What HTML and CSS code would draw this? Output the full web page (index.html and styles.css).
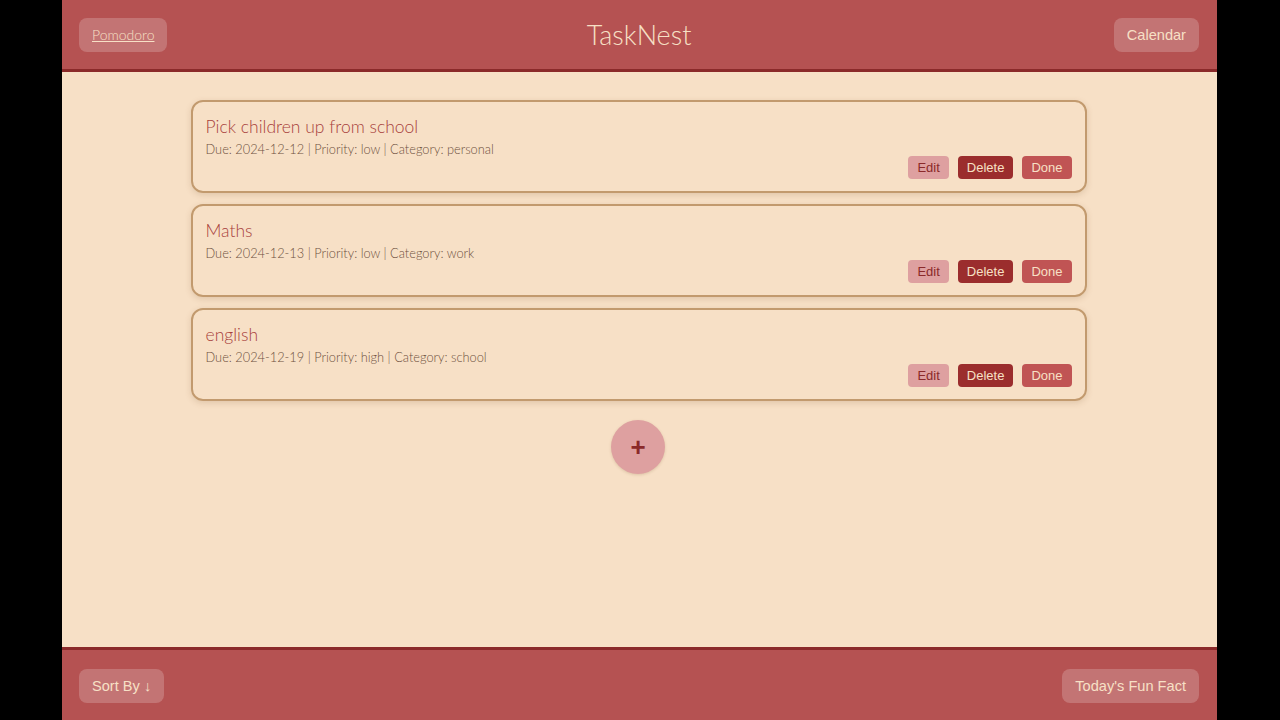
FILE: index.html
```html
<!DOCTYPE html>
<html>
<head>
<meta charset="utf-8">
<title>TaskNest</title>
<link rel="stylesheet" href="styles.css">
</head>
<body>
<div class="app">
  <header class="topbar">
    <a class="btn-ghost link" href="#">Pomodoro</a>
    <h1 class="brand">TaskNest</h1>
    <button class="btn-ghost">Calendar</button>
  </header>
  <main class="content">
    <div class="task-list">
      <div class="task">
        <h3 class="task-title">Pick children up from school</h3>
        <p class="task-meta">Due: 2024-12-12 | Priority: low | Category: personal</p>
        <div class="task-actions">
          <button class="btn-edit">Edit</button>
          <button class="btn-delete">Delete</button>
          <button class="btn-done">Done</button>
        </div>
      </div>
      <div class="task">
        <h3 class="task-title">Maths</h3>
        <p class="task-meta">Due: 2024-12-13 | Priority: low | Category: work</p>
        <div class="task-actions">
          <button class="btn-edit">Edit</button>
          <button class="btn-delete">Delete</button>
          <button class="btn-done">Done</button>
        </div>
      </div>
      <div class="task">
        <h3 class="task-title">english</h3>
        <p class="task-meta">Due: 2024-12-19 | Priority: high | Category: school</p>
        <div class="task-actions">
          <button class="btn-edit">Edit</button>
          <button class="btn-delete">Delete</button>
          <button class="btn-done">Done</button>
        </div>
      </div>
    </div>
    <button class="add-btn">+</button>
  </main>
  <footer class="bottombar">
    <button class="btn-ghost">Sort By ↓</button>
    <button class="btn-ghost">Today's Fun Fact</button>
  </footer>
</div>
</body>
</html>
```
FILE: styles.css
```css
html, body {
  margin: 0;
  padding: 0;
  height: 100%;
  background: #000;
}
.app {
  width: 1155px;
  height: 720px;
  margin-left: 62px;
  display: flex;
  flex-direction: column;
  background: #f7e0c6;
}
.topbar {
  height: 69px;
  flex: none;
  background: #b55252;
  border-bottom: 3px solid #8b2a2a;
  display: flex;
  align-items: center;
  justify-content: space-between;
  padding: 0 18px 0 17px;
}
.brand {
  margin: 0;
  font-family: "Lato", sans-serif;
  font-weight: 300;
  font-size: 27px;
  color: #f7e0c6;
  margin-right: 3px;
}
.btn-ghost {
  height: 34px;
  padding: 0 13px;
  border: none;
  border-radius: 8px;
  background: rgba(255, 255, 255, 0.2);
  color: #f7e0c6;
  font-family: "Liberation Sans", Arial, sans-serif;
  font-size: 14.6px;
  display: inline-flex;
  align-items: center;
}
.link {
  font-family: "Lato", sans-serif;
  font-weight: 300;
  font-size: 14px;
  text-decoration: underline;
  padding: 0 13px;
}
.content {
  flex: 1;
  display: flex;
  flex-direction: column;
  align-items: center;
  padding-top: 28px;
}
.task-list {
  width: 896px;
  margin-right: 2px;
  display: flex;
  flex-direction: column;
  gap: 11px;
}
.task {
  border: 2px solid #c29a6e;
  border-radius: 12px;
  padding: 13px 13px 12px 13px;
  box-shadow: 0 2px 6px rgba(120, 80, 40, 0.18);
  display: flex;
  flex-direction: column;
}
.task-title {
  margin: 0;
  font-family: "Lato", sans-serif;
  font-weight: 300;
  font-size: 17.5px;
  line-height: 24px;
  color: #a83f3c;
}
.task-meta {
  margin: 0;
  font-family: "Lato", sans-serif;
  font-weight: 300;
  font-size: 12.8px;
  line-height: 20px;
  color: #6e5040;
}
.task-actions {
  display: flex;
  justify-content: flex-end;
  gap: 9px;
  margin-top: -3px;
}
.task-actions button {
  height: 23px;
  border: none;
  border-radius: 4px;
  padding: 0 9px;
  font-family: "Liberation Sans", Arial, sans-serif;
  font-size: 13px;
}
.btn-edit {
  background: #dea0a0;
  color: #8b2a2a;
}
.btn-delete {
  background: #9b2d2d;
  color: #f7e0c6;
}
.btn-done {
  background: #c05454;
  color: #f7e0c6;
}
.add-btn {
  margin-top: 19px;
  margin-right: 3px;
  width: 54px;
  height: 54px;
  border-radius: 50%;
  border: none;
  background: #dea0a0;
  color: #8b2a2a;
  font-family: "Liberation Sans", Arial, sans-serif;
  font-size: 26px;
  font-weight: bold;
  line-height: 1;
  box-shadow: 0 1px 3px rgba(120, 80, 40, 0.2);
}
.bottombar {
  height: 73px;
  flex: none;
  box-sizing: border-box;
  background: #b55252;
  border-top: 3px solid #8b2a2a;
  display: flex;
  align-items: center;
  justify-content: space-between;
  padding: 2px 18px 0 17px;
}
```
